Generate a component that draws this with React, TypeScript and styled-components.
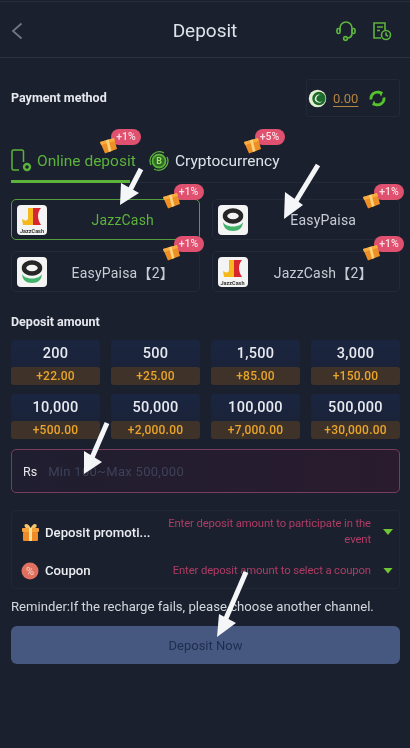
import styled, { createGlobalStyle } from 'styled-components';

const GlobalStyle = createGlobalStyle`
  html, body {
    margin: 0;
    padding: 0;
    background: #1a202e;
  }
  * {
    box-sizing: border-box;
  }
`;

const Page = styled.div`
  position: relative;
  width: 410px;
  height: 748px;
  overflow: hidden;
  background: #1a202e;
  color: #e6e8ee;
  font-family: Roboto, 'Noto Sans CJK SC', sans-serif;
  filter: blur(0.35px);
`;

const Header = styled.header`
  display: grid;
  grid-template-columns: 1fr auto 1fr;
  align-items: center;
  height: 57px;
  margin-top: 1px;
  padding: 3px 18px 0;
  border-top: 1px solid #272d3c;
  border-bottom: 1px solid #2a3040;
`;

const BackButton = styled.div`
  display: flex;
  margin-left: -8px;
  color: #6f7684;
`;

const Title = styled.h1`
  margin: 0 0 2px;
  font-size: 19px;
  font-weight: 400;
  color: #dfe2e9;
`;

const HeaderIcons = styled.div`
  display: flex;
  justify-content: flex-end;
  align-items: center;
  gap: 16px;
  color: #5cb33b;
`;

const Content = styled.main`
  padding: 0 10px 0 11px;
`;

const PaymentRow = styled.div`
  display: flex;
  justify-content: space-between;
  align-items: center;
  height: 38px;
  margin-top: 21px;
`;

const SectionTitle = styled.h2`
  margin: 0;
  font-size: 12.5px;
  line-height: 16px;
  font-weight: 700;
  color: #e6e8ee;
`;

const BalanceBox = styled.div`
  display: flex;
  align-items: center;
  width: 94px;
  height: 38px;
  padding-left: 1px;
  border: 1px solid #222938;
  border-radius: 3px;
`;

const BalanceValue = styled.span`
  margin: 0 11px 0 6px;
  font-size: 13px;
  color: #b5843f;
  text-decoration: underline;
  text-underline-offset: 3px;
`;

const Tabs = styled.div`
  display: flex;
  height: 38px;
  margin-top: 28px;
  border-bottom: 1px solid #222938;
`;

const Tab = styled.div<{ $active?: boolean }>`
  position: relative;
  display: flex;
  align-items: center;
  gap: ${(p) => (p.$active ? '4px' : '5px')};
  width: ${(p) => (p.$active ? '137px' : 'auto')};
  height: 38px;
  padding-bottom: 6px;
  font-size: 15.5px;
  color: ${(p) => (p.$active ? '#5cb33b' : '#dfe2e9')};

  &::after {
    content: '';
    display: ${(p) => (p.$active ? 'block' : 'none')};
    position: absolute;
    left: 0;
    bottom: 0;
    width: 119px;
    height: 3px;
    background: #5cb33b;
  }
`;

const Bonus = styled.div<{ $top: number; $right: number }>`
  position: absolute;
  top: ${(p) => p.$top}px;
  right: ${(p) => p.$right}px;
  display: flex;
  align-items: flex-start;
`;

const BonusPill = styled.span`
  display: block;
  width: 30px;
  height: 16px;
  line-height: 16px;
  text-align: center;
  font-size: 10.5px;
  font-weight: 500;
  color: #f9dfe4;
  background: #e0506f;
  border-radius: 8px;
`;

const BonusGift = styled.span`
  display: flex;
  margin: 8px -6px 0 0;
  position: relative;
  z-index: 1;
`;

const MethodGrid = styled.div`
  display: grid;
  grid-template-columns: repeat(2, 1fr);
  gap: 11px 12px;
  margin-top: 16px;
`;

const MethodCard = styled.div<{ $active?: boolean }>`
  position: relative;
  display: flex;
  align-items: center;
  height: 41px;
  padding-left: 5px;
  border: 1px solid ${(p) => (p.$active ? '#559c3c' : '#232a39')};
  border-radius: 5px;
`;

const MethodLogo = styled.div`
  display: flex;
  flex-direction: column;
  align-items: center;
  width: 30px;
  height: 30px;
  flex: none;
  background: #f4f4f4;
  border-radius: 4px;
  overflow: hidden;
`;

const LogoCaption = styled.span`
  font-size: 5.5px;
  line-height: 7px;
  font-weight: 700;
  color: #333;
  white-space: nowrap;
`;

const MethodName = styled.span<{ $active?: boolean }>`
  flex: 1;
  text-align: center;
  font-size: 14px;
  letter-spacing: 0.2px;
  color: ${(p) => (p.$active ? '#5cb33b' : '#c9ccd4')};
`;

const AmountTitle = styled(SectionTitle)`
  margin-top: 22px;
`;

const AmountGrid = styled.div`
  display: grid;
  grid-template-columns: repeat(4, 1fr);
  gap: 10px 11px;
  margin-top: 10px;
`;

const AmountTile = styled.div`
  display: flex;
  flex-direction: column;
  height: 44px;
  background: linear-gradient(180deg, #1a2540, #1a2134);
  border-radius: 4px;
  text-align: center;
`;

const AmountValue = styled.span`
  flex: 1;
  line-height: 27px;
  font-size: 14.5px;
  font-weight: 500;
  color: #e8eaf0;
  letter-spacing: 0.3px;
`;

const AmountBonus = styled.span`
  height: 18px;
  line-height: 18px;
  font-size: 12px;
  font-weight: 500;
  letter-spacing: 0.2px;
  color: #eba52a;
  background: #3f3329;
  border-radius: 3px;
`;

const AmountInput = styled.div`
  display: flex;
  align-items: center;
  gap: 11px;
  height: 44px;
  margin-top: 11px;
  padding-left: 11px;
  background: linear-gradient(90deg, #1f1e30, #2a1b2e);
  border: 1px solid #7b3d5e;
  border-radius: 5px;
`;

const Currency = styled.span`
  font-size: 12.5px;
  color: #e6e8ee;
`;

const Placeholder = styled.span`
  font-size: 13px;
  letter-spacing: 0.3px;
  color: #3d4259;
`;

const PromoBox = styled.section`
  margin-top: 17px;
  padding: 0 6px 0 9px;
  height: 79px;
  border: 1px solid #212736;
  border-radius: 4px;
`;

const PromoRow = styled.div<{ $height: number }>`
  display: flex;
  align-items: center;
  height: ${(p) => p.$height}px;
`;

const PromoIcon = styled.span`
  display: flex;
  flex: none;
  width: 24px;
`;

const PromoLabel = styled.span`
  flex: 1;
  font-size: 13.2px;
  font-weight: 500;
  color: #eceef2;
  white-space: nowrap;
`;

const PromoHint = styled.span`
  flex: none;
  width: 206px;
  text-align: right;
  font-size: 11.3px;
  line-height: 16px;
  letter-spacing: -0.12px;
  color: #b03c64;
`;

const Caret = styled.span`
  flex: none;
  width: 10px;
  height: 6px;
  margin-left: 12px;
  background: #6fc533;
  clip-path: polygon(0 0, 100% 0, 50% 100%);
`;

const Reminder = styled.p`
  margin: 8px 0 0;
  font-size: 13.15px;
  line-height: 20px;
  color: #d4d7dd;
  white-space: nowrap;
`;

const SubmitButton = styled.button`
  display: block;
  width: 100%;
  height: 38px;
  margin-top: 9px;
  padding: 0;
  border: 0;
  border-radius: 6px;
  background: #46587f;
  color: #1e2d50;
  font-family: inherit;
  font-size: 13px;
`;

const ArrowLayer = styled.svg`
  position: absolute;
  top: 0;
  left: 0;
  pointer-events: none;
  z-index: 5;
`;

const GiftIcon = () => (
  <svg width="17" height="17" viewBox="0 0 17 17">
    <path d="M0 5l14-4 3 11-12 4.500z" fill="#ee8f26" />
    <path d="M0 5l14-4 .8 3L1 8z" fill="#f7ad42" />
    <path d="M6 3.200l2.500-.7 3 11.500-2.600 1z" fill="#fbd27a" />
  </svg>
);

const BonusTag = ({ label, top, right }: { label: string; top: number; right: number }) => (
  <Bonus $top={top} $right={right}>
    <BonusGift>
      <GiftIcon />
    </BonusGift>
    <BonusPill>{label}</BonusPill>
  </Bonus>
);

const JazzLogo = () => (
  <MethodLogo>
    <svg width="28" height="23" viewBox="0 0 28 23">
      <path d="M10 3h5v17H5l-1-6 3 1.500c2 .5 3-1 3-3z" fill="#f6b91c" />
      <path d="M15 3h8c-2 2-3 5-3 8s1 6 3 9h-8z" fill="#d8252e" />
    </svg>
    <LogoCaption>JazzCash</LogoCaption>
  </MethodLogo>
);

const PaisaLogo = () => (
  <MethodLogo>
    <svg width="30" height="30" viewBox="0 0 30 30">
      <ellipse cx="15" cy="11" rx="8" ry="5.500" fill="none" stroke="#262626" strokeWidth="4.500" />
      <path d="M5 17c3 6 17 6 20 0-.5 6-4 9-10 9S5.500 23 5 17z" fill="#43b26b" />
    </svg>
  </MethodLogo>
);

const methods = [
  { name: 'JazzCash', logo: <JazzLogo />, active: true },
  { name: 'EasyPaisa', logo: <PaisaLogo /> },
  { name: 'EasyPaisa【2】', logo: <PaisaLogo /> },
  { name: 'JazzCash【2】', logo: <JazzLogo /> },
];

const amounts = [
  ['200', '+22.00'],
  ['500', '+25.00'],
  ['1,500', '+85.00'],
  ['3,000', '+150.00'],
  ['10,000', '+500.00'],
  ['50,000', '+2,000.00'],
  ['100,000', '+7,000.00'],
  ['500,000', '+30,000.00'],
];

// shaft start, shaft end, then the arrow head as tip + two wings
const arrows = [
  { shaft: [141, 169, 127, 196], head: '120,205 139,193 121,183' },
  { shaft: [318, 165, 293, 206], head: '284,219 303,205 285,192' },
  { shaft: [107, 423, 91, 460], head: '84,474 102,462 84,451' },
  { shaft: [246, 572, 224, 623], head: '217,637 236,623 219,614' },
];

const App = () => (
  <Page>
    <GlobalStyle />
    <Header>
      <BackButton>
        <svg width="14" height="20" viewBox="0 0 14 20" fill="none" stroke="currentColor" strokeWidth="1.800">
          <path d="M11.500 2.500L3 10l8.500 7.500" />
        </svg>
      </BackButton>
      <Title>Deposit</Title>
      <HeaderIcons>
        <svg width="20" height="22" viewBox="0 0 20 22" fill="none" stroke="currentColor" strokeWidth="1.700">
          <path d="M4 11V8a6 6 0 0 1 12 0v5c0 3-2 5-5 5" />
          <rect x="1" y="8.500" width="3" height="5" rx="1.500" />
          <rect x="16" y="8.500" width="3" height="5" rx="1.500" />
          <circle cx="9.500" cy="18.500" r="1.800" />
        </svg>
        <svg width="20" height="20" viewBox="0 0 20 20" fill="none" stroke="currentColor" strokeWidth="1.600">
          <path d="M9 17H2V2h11v7" />
          <path d="M5 6h6M5 9.500h3" />
          <circle cx="14" cy="14" r="4.500" />
          <path d="M14 11.500V14l2 1.200" />
        </svg>
      </HeaderIcons>
    </Header>

    <Content>
      <PaymentRow>
        <SectionTitle>Payment method</SectionTitle>
        <BalanceBox>
          <svg width="19" height="19" viewBox="0 0 20 20">
            <circle cx="10" cy="10" r="9.200" fill="#e4efd2" />
            <circle cx="11.500" cy="10" r="7" fill="#1c6a2c" />
            <path d="M15 12.500a4.200 4.200 0 1 1-1.500-6 3.600 3.600 0 1 0 1.500 6z" fill="#eef6e6" />
          </svg>
          <BalanceValue>0.00</BalanceValue>
          <svg width="17" height="17" viewBox="0 0 17 17" fill="none" stroke="#58c22e" strokeWidth="2.800">
            <path d="M2 9.500A6.500 6.500 0 0 1 11 2.700" />
            <path d="M15 7.500A6.500 6.500 0 0 1 6 14.300" />
            <path d="M9 .5l5 1.500-2 4.500z" fill="#58c22e" stroke="none" />
            <path d="M8 16.500L3 15l2-4.500z" fill="#58c22e" stroke="none" />
          </svg>
        </BalanceBox>
      </PaymentRow>

      <Tabs>
        <Tab $active>
          <svg width="22" height="24" viewBox="0 0 22 24" fill="none" stroke="currentColor" strokeWidth="1.500">
            <path d="M8 21H2.500A1.500 1.500 0 0 1 1 19.500v-17A1.500 1.500 0 0 1 2.500 1H11a1.500 1.500 0 0 1 1.500 1.500V13" />
            <circle cx="16" cy="18" r="3" strokeWidth="2.400" />
          </svg>
          Online deposit
          <BonusTag label="+1%" top={-16} right={7} />
        </Tab>
        <Tab>
          <svg width="22" height="22" viewBox="0 0 22 22" fill="none" stroke="#5cb33b">
            <path d="M3 15A9.300 9.300 0 0 1 16 3M19 7a9.300 9.300 0 0 1-13 12" strokeWidth="1.300" />
            <circle cx="11" cy="11" r="6.500" fill="#2f6a22" strokeWidth="1.800" />
            <text x="11" y="14.300" textAnchor="middle" fontSize="9" fontWeight="700" fill="#9be06a" stroke="none">B</text>
          </svg>
          Cryptocurrency
          <BonusTag label="+5%" top={-16} right={-5} />
        </Tab>
      </Tabs>

      <MethodGrid>
        {methods.map((m) => (
          <MethodCard key={m.name} $active={m.active}>
            {m.logo}
            <MethodName $active={m.active}>{m.name}</MethodName>
            <BonusTag label="+1%" top={-16} right={-5} />
          </MethodCard>
        ))}
      </MethodGrid>

      <AmountTitle>Deposit amount</AmountTitle>
      <AmountGrid>
        {amounts.map(([value, bonus]) => (
          <AmountTile key={value}>
            <AmountValue>{value}</AmountValue>
            <AmountBonus>{bonus}</AmountBonus>
          </AmountTile>
        ))}
      </AmountGrid>

      <AmountInput>
        <Currency>Rs</Currency>
        <Placeholder>Min 100~Max 500,000</Placeholder>
      </AmountInput>

      <PromoBox>
        <PromoRow $height={42}>
          <PromoIcon>
            <svg width="19" height="19" viewBox="0 0 19 19">
              <path d="M5 1c2 0 4 2 4.500 4C11 3 12 1 14 1s2.500 3 0 4H5C3 4 3 1 5 1z" fill="#f7c56a" />
              <rect x="1" y="5" width="17" height="4" rx="1" fill="#f6a33a" />
              <rect x="2" y="9" width="15" height="9" rx="1" fill="#ee8a27" />
              <rect x="8" y="5" width="3" height="13" fill="#fbe0a0" />
            </svg>
          </PromoIcon>
          <PromoLabel>Deposit promoti...</PromoLabel>
          <PromoHint>Enter deposit amount to participate in the event</PromoHint>
          <Caret />
        </PromoRow>
        <PromoRow $height={35}>
          <PromoIcon>
            <svg width="18" height="18" viewBox="0 0 18 18">
              <circle cx="9" cy="9" r="8.500" fill="#e0705f" />
              <text x="9" y="13" textAnchor="middle" fontSize="11" fill="#f6d6cc">%</text>
            </svg>
          </PromoIcon>
          <PromoLabel>Coupon</PromoLabel>
          <PromoHint>Enter deposit amount to select a coupon</PromoHint>
          <Caret />
        </PromoRow>
      </PromoBox>

      <Reminder>Reminder:If the recharge fails, please choose another channel.</Reminder>
      <SubmitButton>Deposit Now</SubmitButton>
    </Content>

    <ArrowLayer width="410" height="748" viewBox="0 0 410 748">
      {arrows.map((a) => (
        <g key={a.head} fill="#f4f6f8" stroke="#f4f6f8">
          <line x1={a.shaft[0]} y1={a.shaft[1]} x2={a.shaft[2]} y2={a.shaft[3]} strokeWidth="5" />
          <polygon points={a.head} strokeWidth="0" />
        </g>
      ))}
    </ArrowLayer>
  </Page>
);

export default App;
